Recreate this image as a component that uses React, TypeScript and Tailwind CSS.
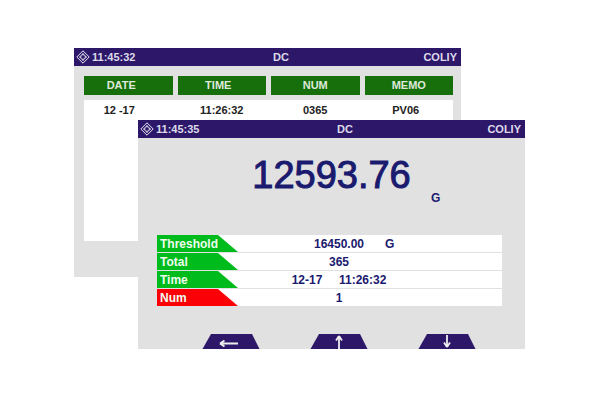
const NAVY = "text-[#1a1a6e]";

// crosshair logo in the title bars
const Logo = () => (
  <svg width="14" height="14" viewBox="0 0 14 14" fill="none" stroke="#e8e6f2" strokeWidth="1">
    <path d="M7 .8 13.2 7 7 13.2 .8 7Z" />
    <circle cx="7" cy="7" r="2.400" />
    <path d="M7 3v1.600M7 9.400V11M3 7h1.600M9.400 7H11" />
  </svg>
);

const TitleBar = ({ time }: { time: string }) => (
  <div className="flex h-[18px] items-center bg-[#2c1769] pl-[2px] pr-[4px] text-[11px] font-bold text-[#dedbea]">
    <div className="flex w-[190px] items-center gap-[2px]">
      <Logo />
      <span>{time}</span>
    </div>
    <div className="w-[30px] text-center">DC</div>
    <div className="flex-1 text-right">COLIY</div>
  </div>
);

const columns = [
  { head: "DATE", value: "12 -17", headClass: "pr-[14px]", valueClass: "pr-[18px]" },
  { head: "TIME", value: "11:26:32", headClass: "pr-[7px]", valueClass: "" },
  { head: "NUM", value: "0365", headClass: "", valueClass: "" },
  { head: "MEMO", value: "PV06", headClass: "", valueClass: "pr-[6px]" },
];

const BackWindow = () => (
  <div className="absolute left-[74px] top-[48px] h-[229px] w-[387px] bg-[#e1e1e1]">
    <TitleBar time="11:45:32" />
    <div className="mx-[10px] mt-[10px] w-[369px]">
      <div className="grid grid-cols-4 gap-[5px]">
        {columns.map((c) => (
          <div key={c.head} className={`flex h-[19px] items-center justify-center bg-[#176f0c] text-[11px] font-bold text-[#dfe9da] ${c.headClass}`}>
            {c.head}
          </div>
        ))}
      </div>
      <div className="mt-[5px] grid h-[141px] grid-cols-4 gap-[5px] bg-white pt-[2px] text-[11px] font-bold text-[#222]">
        {columns.map((c) => (
          <div key={c.head} className={`text-center ${c.valueClass}`}>
            {c.value}
          </div>
        ))}
      </div>
    </div>
  </div>
);

const rows = [
  { label: "Threshold", color: "#00bb1c", value: "16450.00", unit: "G" },
  { label: "Total", color: "#00bb1c", value: "365" },
  { label: "Time", color: "#00bb1c", value: "12-17     11:26:32" },
  { label: "Num", color: "#fb0007", value: "1" },
];

const Row = ({ label, color, value, unit }: { label: string; color: string; value: string; unit?: string }) => (
  <div className="relative flex h-[17px] items-center bg-white">
    <svg width="82" height="17" viewBox="0 0 82 17" className="absolute left-0 top-0">
      <path d="M0 0H61L81 17H0Z" fill={color} />
    </svg>
    <span className="relative ml-[3px] w-[80px] text-[12px] font-bold text-[#eefcee]">{label}</span>
    <span className={`relative ml-[34px] w-[130px] whitespace-pre text-center text-[12px] font-bold ${NAVY}`}>{value}</span>
    {unit && <span className={`absolute left-[228px] text-[12px] font-bold ${NAVY}`}>{unit}</span>}
  </div>
);

const ArrowButton = ({ dir }: { dir: "left" | "up" | "down" }) => (
  <svg width="58" height="15" viewBox="0 0 58 15">
    <path d="M9 0H50L57.500 15H.5Z" fill="#2c1769" />
    {dir === "left" && <path d="M18 9.500H36M18 9.500l4.500-3M18 9.500l4.500 3" stroke="#eee" strokeWidth="1.800" fill="none" />}
    {dir === "up" && <path d="M29 15V2M29 2l-3 4.500M29 2l3 4.500" stroke="#eee" strokeWidth="1.800" fill="none" />}
    {dir === "down" && <path d="M29 1v12M29 13l-3-4.500M29 13l3-4.500" stroke="#eee" strokeWidth="1.800" fill="none" />}
  </svg>
);

const FrontWindow = () => (
  <div className="absolute left-[138px] top-[120px] flex h-[229px] w-[387px] flex-col bg-[#e1e1e1]">
    <TitleBar time="11:45:35" />
    <div className="relative mt-[9px] flex h-[55px] items-center justify-center">
      <span className={`text-[38px] font-normal leading-none [-webkit-text-stroke:1px_#1a1a6e] ${NAVY}`}>12593.76</span>
      <span className={`absolute left-[293px] top-[42px] text-[12px] font-bold ${NAVY}`}>G</span>
    </div>
    <div className="ml-[19px] mt-[33px] flex w-[345px] flex-col gap-[1px]">
      {rows.map((r) => (
        <Row key={r.label} {...r} />
      ))}
    </div>
    <div className="mt-auto flex justify-between pl-[64px] pr-[49px]">
      <ArrowButton dir="left" />
      <ArrowButton dir="up" />
      <ArrowButton dir="down" />
    </div>
  </div>
);

export default function App() {
  return (
    <div className="relative h-[400px] w-[600px] overflow-hidden bg-white font-['Liberation_Sans',sans-serif]">
      <BackWindow />
      <FrontWindow />
    </div>
  );
}
